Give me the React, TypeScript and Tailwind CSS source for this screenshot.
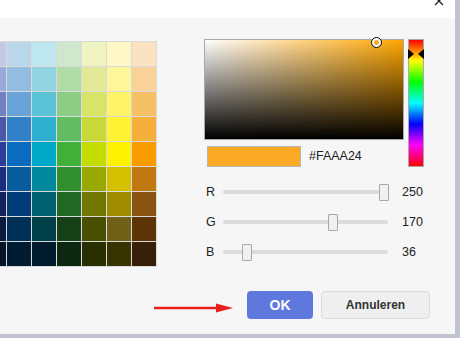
import React from 'react';

const swatches: string[][] = [
  ['#c3c9e0', '#bad6ea', '#bde6ee', '#cfe8cd', '#eff4c0', '#fff8c6', '#fbe3c2'],
  ['#9aaad6', '#93bde0', '#92d4e2', '#b0dca8', '#e2ea98', '#fff59a', '#fad29a'],
  ['#7480c0', '#68a4d8', '#5cc2d8', '#8ccc84', '#d6e468', '#fff36a', '#f6c064'],
  ['#4a58a8', '#3280c8', '#30b0d0', '#62bc62', '#c8d838', '#fff232', '#f4b03a'],
  ['#2c3c98', '#0a6cc0', '#00a8c8', '#40b038', '#c4dc00', '#fff200', '#f89c00'],
  ['#1e2c80', '#085c9c', '#00889c', '#309030', '#98a800', '#d4c000', '#c07810'],
  ['#142260', '#003c78', '#006070', '#206824', '#707800', '#a08c00', '#8a5410'],
  ['#0c1a40', '#003058', '#004048', '#184018', '#485000', '#706018', '#5c3408'],
  ['#081428', '#001c30', '#001c2c', '#0c2810', '#283000', '#383400', '#382008'],
];

const channels = [
  { label: 'R', value: 250 },
  { label: 'G', value: 170 },
  { label: 'B', value: 36 },
];

const font = { fontFamily: '"Liberation Sans", Arial, sans-serif' };

export default function App() {
  return (
    <div className="w-[460px] h-[338px] bg-[#bfc3d0] overflow-hidden flex" style={font}>
      <div className="w-[455px] h-[334px] bg-[#f6f6f6] flex flex-col text-[#222]">
        {/* title bar, scrolled up */}
        <div className="h-[18px] bg-white flex justify-end pr-[11px] shrink-0">
          <svg width="10" height="6" viewBox="0 0 10 6" className="block">
            <path d="M1 -3 L9 5 M9 -3 L1 5" stroke="#222" strokeWidth="1.3" fill="none" />
          </svg>
        </div>

        <div className="h-[250px] flex items-start shrink-0">
          {/* palette */}
          <div className="mt-[23px] ml-[-19px] grid grid-cols-[repeat(7,24px)] auto-rows-[24px] gap-px p-px bg-[#dadada] shrink-0">
            {swatches.flat().map((c, i) => (
              <div key={i} style={{ backgroundColor: c }} />
            ))}
          </div>

          {/* picker */}
          <div className="ml-[47px] mt-[21px] flex flex-col">
            <div className="flex items-start gap-[4px]">
              <div className="flex flex-col">
                <div className="relative w-[200px] h-[101px] border border-[#a9a9a9] bg-[#ffa600]">
                  <div className="absolute inset-0 bg-gradient-to-r from-white to-transparent" />
                  <div className="absolute inset-0 bg-gradient-to-t from-black to-transparent" />
                  <div className="absolute left-[166px] top-[-3px] w-[11px] h-[11px] rounded-full border border-black bg-white flex items-center justify-center">
                    <div className="w-[5px] h-[5px] rounded-full bg-[#faaa24]" />
                  </div>
                </div>
                <div className="mt-[6px] ml-[3px] flex items-center gap-[8px]">
                  <div className="w-[94px] h-[21px] border border-[#b5b5b5] bg-[#faaa24]" />
                  <span className="text-[12.5px]">#FAAA24</span>
                </div>
              </div>
              <div className="relative w-[16px] h-[128px] border border-[#a9a9a9] bg-[linear-gradient(to_bottom,#ff0000,#ffff00,#00ff00,#00ffff,#0000ff,#ff00ff,#ff0000)]">
                <svg width="16" height="10" viewBox="0 0 16 10" className="absolute left-[-1px] top-[9px]">
                  <path d="M0 0 L6 5 L0 10 Z M16 0 L10 5 L16 10 Z" fill="#000" />
                </svg>
              </div>
            </div>

            <div className="mt-[10px] pl-[2px] flex flex-col">
              {channels.map((ch) => (
                <div key={ch.label} className="h-[30px] flex items-center text-[12.5px]">
                  <span className="w-[17px]">{ch.label}</span>
                  <div className="relative w-[165px] h-[17px] flex items-center">
                    <div className="w-full h-[4px] rounded-full bg-[#dcdcdc]" />
                    <div
                      className="absolute top-0 w-[10px] h-[17px] bg-[#f0f0f0] border border-[#a8a8a8] rounded-[1px]"
                      style={{ left: `${Math.round((ch.value / 255) * 163) - 4}px` }}
                    />
                  </div>
                  <span className="ml-[14px]">{ch.value}</span>
                </div>
              ))}
            </div>
          </div>
        </div>

        {/* footer */}
        <div className="mt-[23px] pl-[154px] flex items-start">
          <svg width="80" height="12" viewBox="0 0 80 12" className="mt-[11px] shrink-0">
            <path d="M0 6 L66 6" stroke="#e8201c" strokeWidth="2.5" />
            <path d="M62 1.5 L79 6 L62 10.5 Z" fill="#e8201c" />
          </svg>
          <button className="ml-[13px] w-[66px] h-[28px] rounded-[4px] bg-[#5f78dd] text-white font-bold text-[14px]">
            OK
          </button>
          <button className="ml-[8px] w-[109px] h-[28px] rounded-[4px] bg-[#efefef] border border-[#dcdcdc] text-[#333] font-bold text-[12px]">
            Annuleren
          </button>
        </div>
      </div>
    </div>
  );
}
